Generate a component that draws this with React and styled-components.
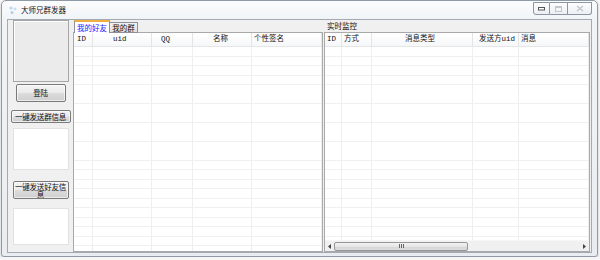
import React from 'react'
import styled, { createGlobalStyle } from 'styled-components'

const Global = createGlobalStyle`
  html, body { margin:0; padding:0; background:#f6f6f6; }
  body { font-family:'Noto Sans CJK SC', sans-serif; }
  * { box-sizing:border-box; }
`

// column widths and where each header label starts inside its column
const friendCols = ['19px', '59px', '41px', '59px', '1fr']
const friendHead = [['ID', 3], ['uid', 20], ['QQ', 9], ['名称', 20], ['个性签名', 2]]
const monitorCols = ['17px', '30px', '101px', '46px', '1fr']
const monitorHead = [['ID', 2], ['方式', 2], ['消息类型', 33], ['发送方uid', 6], ['消息', 2]]

const App = () => {
  return (
    <>
      <Global />
      <Window>
        <TitleBar>
          <AppIcon viewBox="0 0 10 10">
            <circle cx="3" cy="3" r="1.6" fill="#bcd4ee" />
            <circle cx="7" cy="4" r="1.4" fill="#c9dcf2" />
            <circle cx="4" cy="7.5" r="1.5" fill="#b3cbe8" />
          </AppIcon>
          <Title>大师兄群发器</Title>
          <Caption>
            <CapBtn w={17} first>
              <svg width="7" height="4" viewBox="0 0 7 4"><rect x="0.5" y="0.5" width="6" height="2.5" fill="#fff" stroke="#555" /></svg>
            </CapBtn>
            <CapBtn w={18}>
              <svg width="7" height="6" viewBox="0 0 7 6"><rect x="0.5" y="0.5" width="6" height="5" fill="none" stroke="#c3c7cc" /><rect x="1" y="1" width="5" height="1" fill="#c3c7cc" /></svg>
            </CapBtn>
            <CapBtn w={24} last>
              <svg width="8" height="7" viewBox="0 0 8 7"><path d="M1 1 L7 6 M7 1 L1 6" stroke="#c0c4c9" strokeWidth="1.4" /></svg>
            </CapBtn>
          </Caption>
        </TitleBar>
        <Client>
          <Side>
            <Avatar />
            <Button w={50} h={18} mt={2}>登陆</Button>
            <Button w={60} h={13} mt={8}>一键发送群信息</Button>
            <WhiteBox h={42} mt={5} />
            <Button w={56} h={18} mt={11} wrap>一键发送好友信息</Button>
            <WhiteBox h={37} mt={9} />
          </Side>
          <TabArea>
            <TabStrip>
              <Tab active w={36}>我的好友</Tab>
              <Tab w={28}>我的群</Tab>
            </TabStrip>
            <Grid>
              <Header cols={friendCols.join(' ')}>
                {friendHead.map(([h, pad]) => <HeadCell key={h} pad={pad}>{h}</HeadCell>)}
              </Header>
              <Body cols={friendCols.join(' ')}>
                {friendCols.map((c, i) => <BodyCol key={i} />)}
              </Body>
            </Grid>
          </TabArea>
          <Monitor>
            <GroupTitle>实时监控</GroupTitle>
            <Grid>
              <Header cols={monitorCols.join(' ')}>
                {monitorHead.map(([h, pad]) => <HeadCell key={h} pad={pad}>{h}</HeadCell>)}
              </Header>
              <Body cols={monitorCols.join(' ')}>
                {monitorCols.map((c, i) => <BodyCol key={i} />)}
              </Body>
              <HScroll>
                <Arrow>
                  <svg width="3" height="5" viewBox="0 0 3 5"><path d="M3 0 L0 2.5 L3 5 Z" fill="#444" /></svg>
                </Arrow>
                <Thumb>
                  <Grip />
                </Thumb>
                <Track />
                <Arrow>
                  <svg width="3" height="5" viewBox="0 0 3 5"><path d="M0 0 L3 2.5 L0 5 Z" fill="#444" /></svg>
                </Arrow>
              </HScroll>
            </Grid>
          </Monitor>
        </Client>
      </Window>
    </>
  )
}

export default App

const Window = styled.div`
  width:597px;
  height:257px;
  margin-left:1px;
  border:1px solid #8f9aa6;
  border-radius:5px 5px 3px 3px;
  background:linear-gradient(to bottom, #fbfcfd 0, #f1f4f7 18px, #e9edf1 100%);
  box-shadow:0 1px 2px rgba(0,0,0,0.25);
  padding:0 5px 3px 5px;
  display:flex;
  flex-direction:column;
`

const TitleBar = styled.div`
  height:18px;
  display:flex;
  align-items:center;
`

const AppIcon = styled.svg`
  width:10px;
  height:10px;
  margin-left:1px;
`

const Title = styled.span`
  margin-left:3px;
  font-size:7.5px;
  color:#111;
  line-height:1;
`

const Caption = styled.div`
  margin-left:auto;
  margin-right:0;
  align-self:flex-start;
  display:flex;
  margin-top:1px;
`

const CapBtn = styled.div`
  width:${p => p.w}px;
  height:13px;
  border:1px solid #8c96a2;
  border-left:${p => (p.first ? '1px solid #8c96a2' : 'none')};
  border-radius:${p => (p.first ? '0 0 0 3px' : p.last ? '0 0 3px 0' : '0')};
  background:linear-gradient(to bottom, #fdfdfe, #eceff3);
  display:flex;
  align-items:center;
  justify-content:center;
`

const Client = styled.div`
  flex:1;
  display:flex;
  background:#f0f0f0;
  border:1px solid #a3aab3;
`

const Side = styled.div`
  width:65px;
  display:flex;
  flex-direction:column;
  align-items:center;
`

const Avatar = styled.div`
  width:56px;
  height:62px;
  background:#ebebeb;
  border:1px solid #a6a6a6;
  box-shadow:inset 1px 1px 0 #fff;
`

const Button = styled.div`
  width:${p => p.w}px;
  height:${p => p.h}px;
  margin-top:${p => p.mt}px;
  border:1px solid #7a7a7a;
  border-radius:2px;
  background:linear-gradient(to bottom, #f3f3f3 0, #ebebeb 48%, #dcdcdc 52%, #cfcfcf 100%);
  box-shadow:inset 0 0 0 1px rgba(255,255,255,0.6);
  font-size:7.5px;
  color:#111;
  text-align:center;
  line-height:${p => (p.wrap ? '8px' : `${p.h - 2}px`)};
  padding-top:${p => (p.wrap ? '1px' : '0')};
  white-space:${p => (p.wrap ? 'normal' : 'nowrap')};
  overflow:hidden;
  letter-spacing:-0.2px;
`

const WhiteBox = styled.div`
  width:56px;
  height:${p => p.h}px;
  margin-top:${p => p.mt}px;
  background:#fff;
  border:1px solid #e2e2e2;
`

const TabArea = styled.div`
  width:250px;
  display:flex;
  flex-direction:column;
`

const TabStrip = styled.div`
  height:13px;
  display:flex;
  align-items:flex-end;
  padding-left:1px;
  margin-bottom:-1px;
  position:relative;
  z-index:1;
`

const Tab = styled.div`
  width:${p => p.w}px;
  height:${p => (p.active ? '13px' : '11px')};
  font-size:7.5px;
  text-align:center;
  white-space:nowrap;
  line-height:${p => (p.active ? '11px' : '10px')};
  color:${p => (p.active ? '#2020ff' : '#111')};
  background:${p => (p.active ? '#fff' : 'linear-gradient(to bottom, #f2f2f2, #e1e1e1)')};
  border:1px solid #8d9099;
  border-top:${p => (p.active ? '2px solid #f0b040' : '1px solid #8d9099')};
  border-bottom:${p => (p.active ? 'none' : '1px solid #8d9099')};
  border-left:${p => (p.active ? '1px solid #8d9099' : 'none')};
`

const Grid = styled.div`
  flex:1;
  display:flex;
  flex-direction:column;
  background:#fff;
  border:1px solid #a9a9a9;
  min-height:0;
`

const Header = styled.div`
  height:14px;
  display:grid;
  grid-template-columns:${p => p.cols};
  border-bottom:1px solid #e6e6e6;
  background:linear-gradient(to bottom, #ffffff, #f6f7f9);
`

const HeadCell = styled.div`
  border-right:1px solid #e4e4e4;
  font-size:7.5px;
  font-family:'Liberation Mono', 'Noto Sans CJK SC', monospace;
  line-height:13px;
  color:#111;
  padding-left:${p => p.pad}px;
  white-space:nowrap;
  overflow:hidden;
`

const Body = styled.div`
  flex:1;
  display:grid;
  grid-template-columns:${p => p.cols};
  background:repeating-linear-gradient(to bottom, transparent 0, transparent 8.5px, #f0f0f0 8.5px, #f0f0f0 9.5px);
`

const BodyCol = styled.div`
  border-right:1px solid #efefef;
`

const Monitor = styled.div`
  flex:1;
  display:flex;
  flex-direction:column;
  padding:0 1px 0 1px;
`

const GroupTitle = styled.div`
  height:12px;
  padding-left:3px;
  font-size:7.5px;
  line-height:12px;
  color:#111;
`

const HScroll = styled.div`
  height:11px;
  display:flex;
  align-items:center;
  background:#f0f0f0;
  border-top:1px solid #f6f6f6;
`

const Arrow = styled.div`
  width:9px;
  height:10px;
  display:flex;
  align-items:center;
  justify-content:center;
`

const Thumb = styled.div`
  width:134px;
  height:9px;
  border:1px solid #979797;
  border-radius:2px;
  background:linear-gradient(to bottom, #f2f2f2 0, #e6e6e6 50%, #d6d6d6 51%, #dcdcdc 100%);
  display:flex;
  align-items:center;
  justify-content:center;
`

const Grip = styled.div`
  width:5px;
  height:4px;
  background:repeating-linear-gradient(to right, #666 0, #666 1px, transparent 1px, transparent 2px);
`

const Track = styled.div`
  flex:1;
`
